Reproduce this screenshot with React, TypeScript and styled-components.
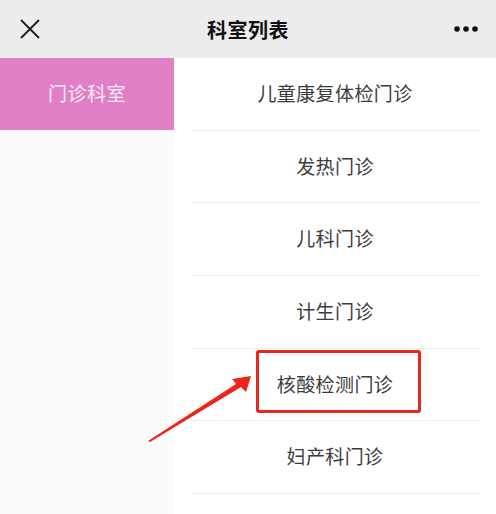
import styled, { createGlobalStyle } from "styled-components";

const GlobalStyle = createGlobalStyle`
  html, body {
    margin: 0;
    padding: 0;
    background: #fdfcfb;
  }
  body {
    font-family: "Noto Sans CJK SC", "Noto Sans", sans-serif;
  }
`;

const Page = styled.div`
  position: relative;
  width: 496px;
  height: 514px;
  overflow: hidden;
  background: #fdfcfb;
`;

const Header = styled.header`
  height: 58px;
  background: #ededed;
  display: grid;
  grid-template-columns: 60px 1fr 60px;
  align-items: center;
`;

const HeaderIcon = styled.div`
  display: flex;
  align-items: center;
  justify-content: center;
  height: 58px;
`;

const Title = styled.h1`
  margin: 0;
  text-align: center;
  font-size: 20px;
  font-weight: 700;
  color: #111;
  letter-spacing: 0.5px;
`;

const Body = styled.div`
  display: flex;
  height: 456px;
`;

const Sidebar = styled.nav`
  width: 174px;
  background: #fdfcfb;
`;

const SideItem = styled.div<{ $active?: boolean }>`
  height: 72px;
  display: flex;
  align-items: center;
  justify-content: center;
  font-size: 19px;
  line-height: 1;
  padding-bottom: 3px;
  box-sizing: border-box;
  color: ${(p) => (p.$active ? "#fbeef7" : "#444")};
  background: ${(p) => (p.$active ? "#e07fc6" : "transparent")};
  letter-spacing: 0.5px;
`;

const List = styled.ul`
  flex: 1;
  margin: 0;
  padding: 0;
  list-style: none;
  background: #fff;
`;

const Row = styled.li`
  position: relative;
  height: 72.7px;
  margin: 0 17px;
  border-bottom: 1px solid #eceeef;
  display: flex;
  align-items: center;
  justify-content: center;
  font-size: 19px;
  line-height: 1;
  padding-bottom: 3px;
  box-sizing: border-box;
  color: #3c3c3c;
  letter-spacing: 0.4px;
`;

const Highlight = styled.span`
  position: absolute;
  left: 65px;
  top: 1px;
  width: 159px;
  height: 57px;
  border: 3px solid #e8261d;
  border-radius: 3px;
`;

const Arrow = styled.svg`
  position: absolute;
  left: 0;
  top: 0;
  pointer-events: none;
`;

const items = [
  "儿童康复体检门诊",
  "发热门诊",
  "儿科门诊",
  "计生门诊",
  "核酸检测门诊",
  "妇产科门诊",
];

export default function App() {
  return (
    <Page>
      <GlobalStyle />
      <Header>
        <HeaderIcon>
          <svg width="20" height="20" viewBox="0 0 20 20">
            <path d="M1 1 L19 19 M19 1 L1 19" stroke="#1c1c1c" strokeWidth="1.8" />
          </svg>
        </HeaderIcon>
        <Title>科室列表</Title>
        <HeaderIcon>
          <svg width="26" height="8" viewBox="0 0 26 8">
            <circle cx="4" cy="4" r="2.8" fill="#111" />
            <circle cx="13" cy="4" r="2.8" fill="#111" />
            <circle cx="22" cy="4" r="2.8" fill="#111" />
          </svg>
        </HeaderIcon>
      </Header>
      <Body>
        <Sidebar>
          <SideItem $active>门诊科室</SideItem>
        </Sidebar>
        <List>
          {items.map((name) => (
            <Row key={name}>
              {name}
              {name === "核酸检测门诊" && <Highlight />}
            </Row>
          ))}
        </List>
      </Body>
      <Arrow width="496" height="514" viewBox="0 0 496 514">
        <polygon
          points="148,441 236,384 232,379 251,376 246,392 241,387 150,442"
          fill="#f0231a"
        />
      </Arrow>
    </Page>
  );
}
